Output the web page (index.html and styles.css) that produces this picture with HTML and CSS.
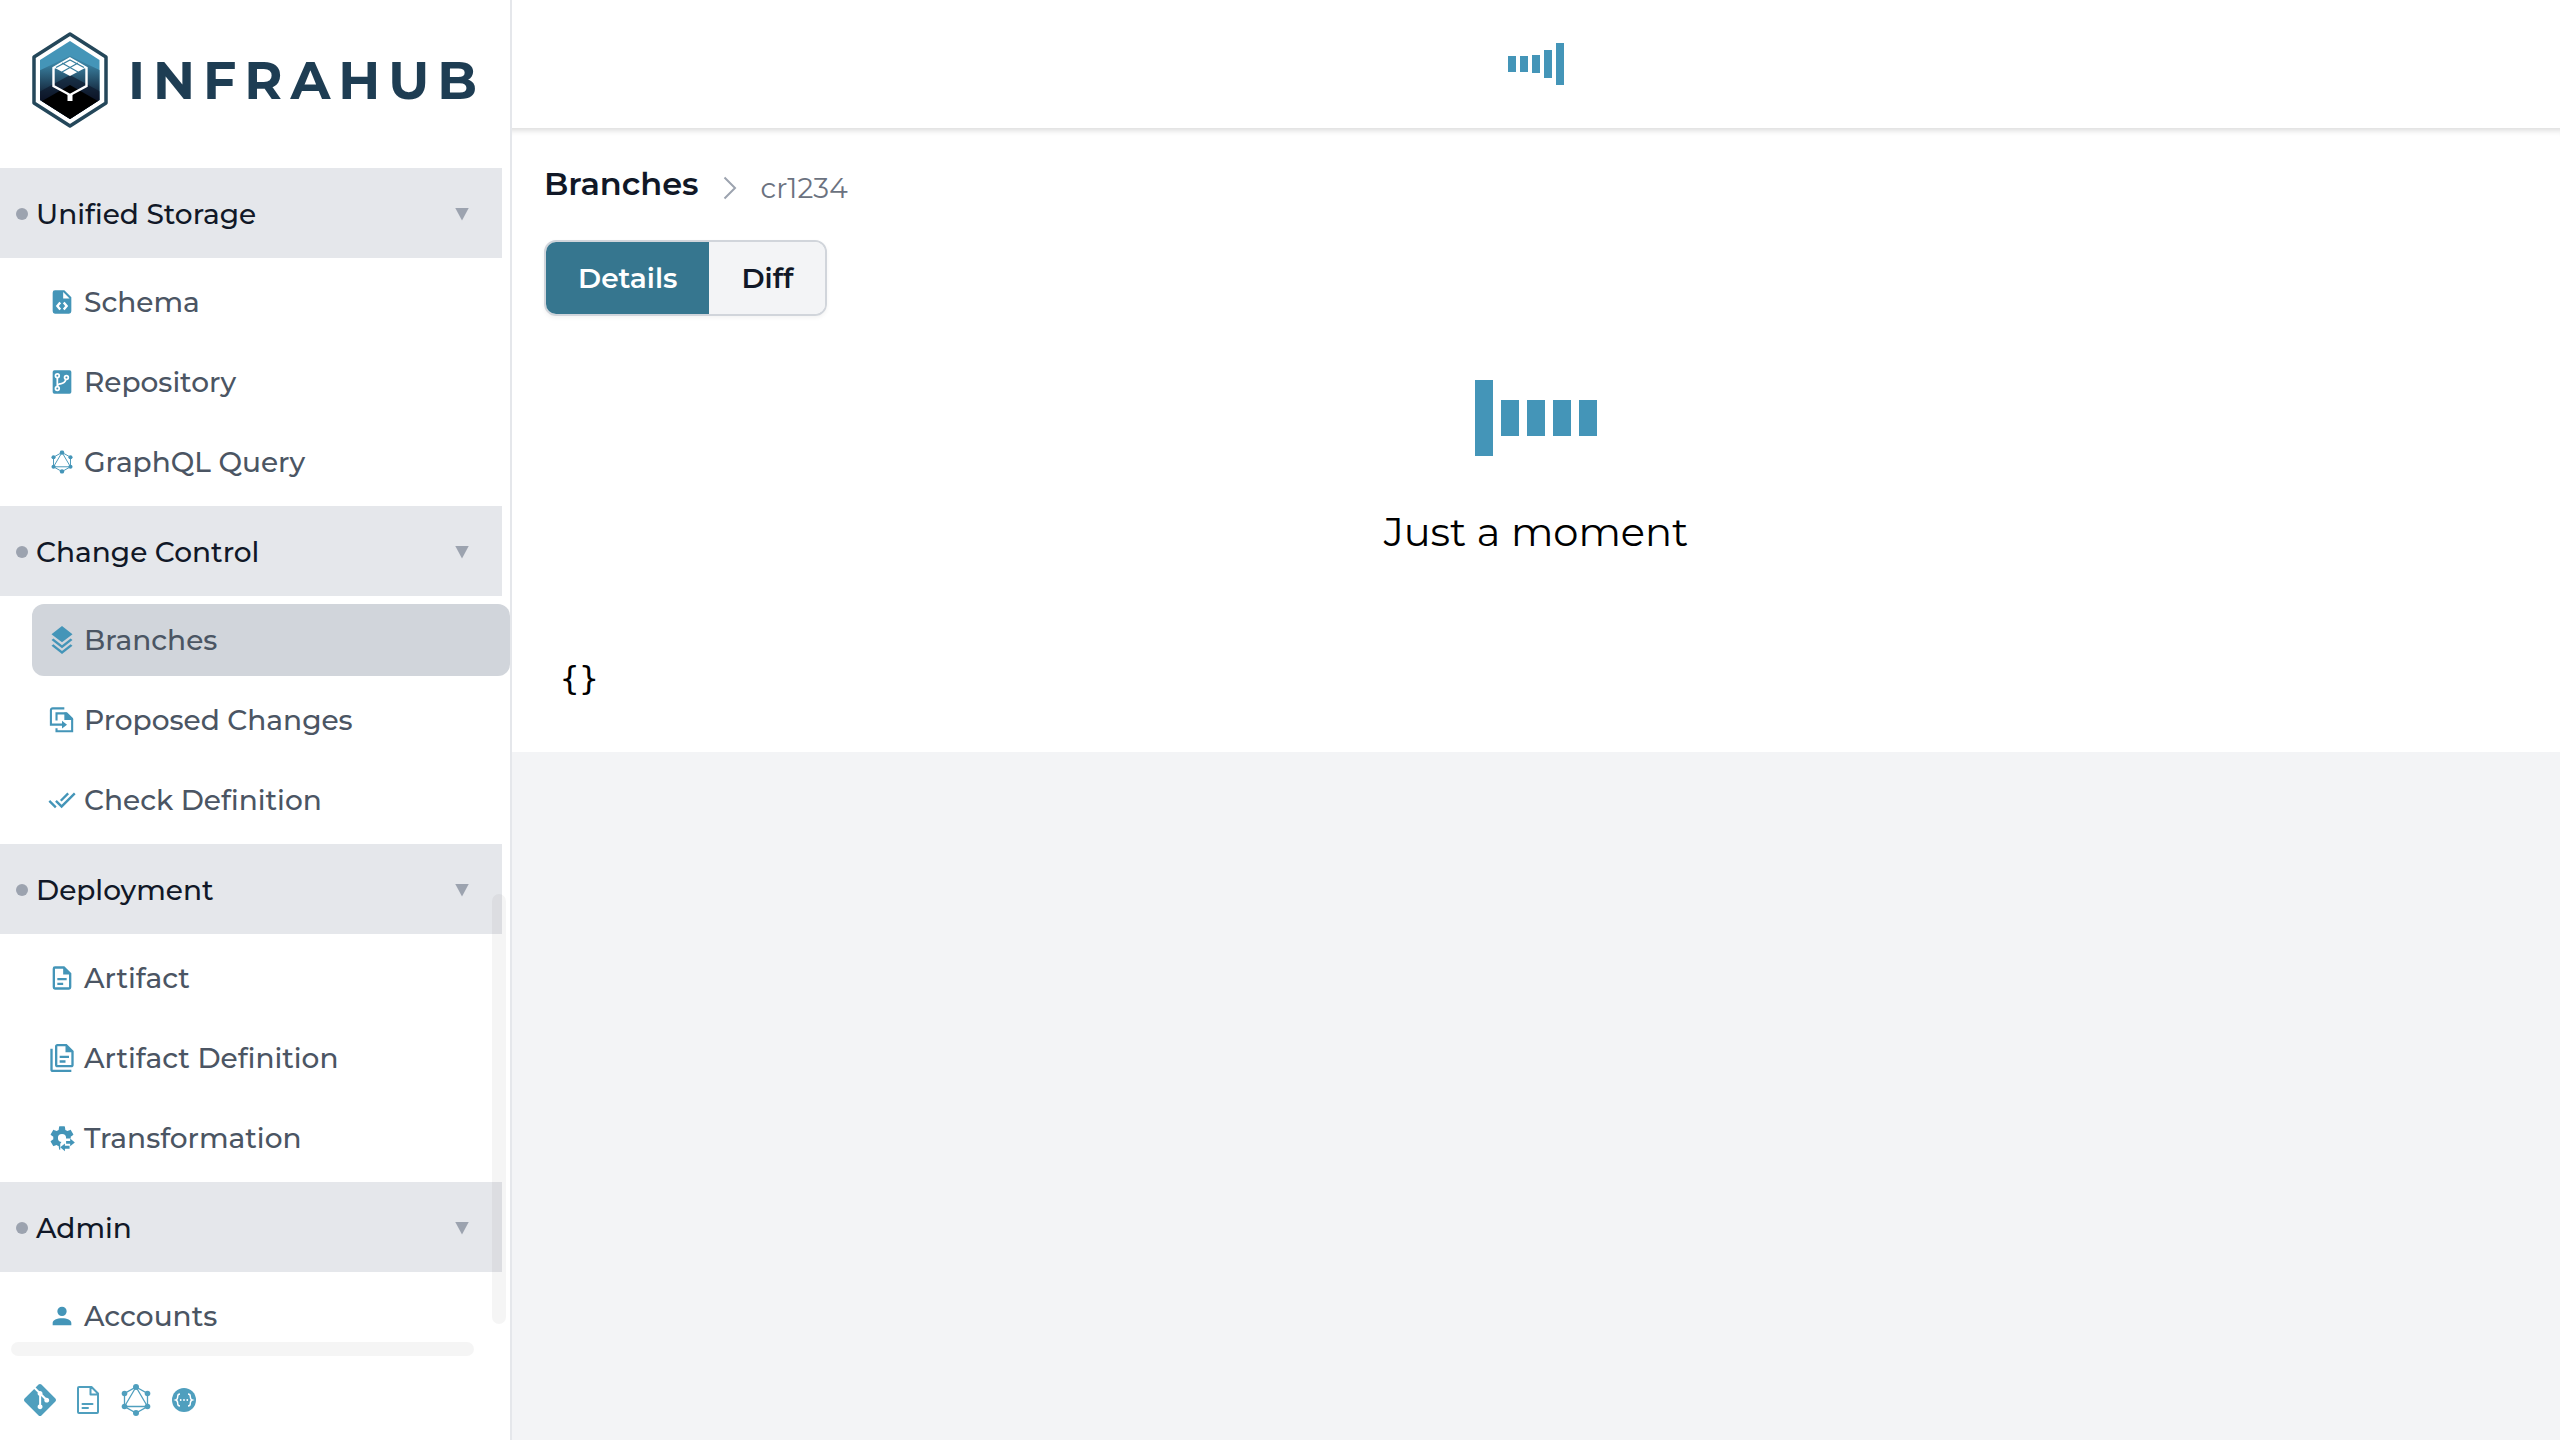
FILE: index.html
```html
<!DOCTYPE html>
<html lang="en">
<head>
<meta charset="utf-8">
<meta name="viewport" content="width=device-width, initial-scale=1">
<title>Infrahub</title>
<link rel="stylesheet" href="styles.css">
</head>
<body>
<svg class="defs" aria-hidden="true">
  <symbol id="graphql" viewBox="0 0 32 32">
    <path d="M16 3 27.5 9.5v13L16 29 4.500 22.500v-13zM16 3 4.500 22.500h23z" fill="none" stroke="currentColor" stroke-width="1.300"/>
    <g fill="currentColor"><circle cx="16" cy="3" r="3"/><circle cx="27.500" cy="9.500" r="2.800"/><circle cx="27.500" cy="22.500" r="2.800"/><circle cx="16" cy="29" r="3"/><circle cx="4.500" cy="22.500" r="2.800"/><circle cx="4.500" cy="9.500" r="2.800"/></g>
  </symbol>
</svg>
<div class="app">
  <aside class="sidebar">
    <a class="brand" href="#">
      <svg class="brand-mark" viewBox="0 0 76 96" aria-hidden="true">
        <defs>
          <linearGradient id="shade" x1="0" y1="0" x2="0" y2="1"><stop offset="0.1" stop-color="#3b83a3"/><stop offset="0.600" stop-color="#0d1528"/></linearGradient>
          <clipPath id="hex"><path d="M38 9 67.500 28v40L38 87 8 68V28z"/></clipPath>
        </defs>
        <path d="M38 2 74 25v46L38 94 2 71V25z" fill="#fff" stroke="#24475a" stroke-width="3.500" stroke-linejoin="round"/>
        <g clip-path="url(#hex)">
          <path d="M0 0h76v96H0z" fill="#4495b8"/>
          <path d="M38 24 76 42v54H0V42z" fill="url(#shade)"/>
          <path d="M38 43 76 64v32H0V64z" fill="#0d1528" opacity=".6"/>
          <path d="M38 53 76 75v21H0V75z" fill="#000"/>
        </g>
        <path d="M38 26.500 54.500 36v18L38 63 21.500 54V36z" fill="none" stroke="#fff" stroke-width="2.400"/>
        <path d="M35.500 62h5v7h-5z" fill="#fff"/>
        <path d="M38 26 54 35.500 38 44 22 35.500z" fill="#fff"/>
        <path d="M30 31 46 40M46 31 30 40M24 35.500 38 28 52 35.500" fill="none" stroke="#397f9e" stroke-width="1.200"/>
      </svg>
      <span class="brand-name">INFRAHUB</span>
    </a>

    <div class="nav-wrap">
      <nav class="nav" aria-label="Main">
        <section>
          <button class="group" type="button"><i class="dot"></i><span>Unified Storage</span><i class="caret"></i></button>
          <ul>
            <li><a href="#"><svg viewBox="0 0 24 24"><path fill-rule="evenodd" d="M6 2h8l6 6v12a2 2 0 0 1-2 2H6a2 2 0 0 1-2-2V4a2 2 0 0 1 2-2zM13 3.500V9h5.500z"/><path d="M10.500 12.500 8 15.500l2.500 3m3-6 2.500 3-2.500 3" fill="none" stroke="#fff" stroke-width="2"/></svg>Schema</a></li>
            <li><a href="#"><svg viewBox="0 0 24 24"><rect x="4" y="2" width="16" height="20" rx="1.500"/><g fill="none" stroke="#fff" stroke-width="1.500"><circle cx="8" cy="6.700" r="1.600"/><circle cx="8" cy="17.500" r="1.600"/><circle cx="15.800" cy="8.200" r="1.600"/><path d="M8 8.300v7.600M15.300 9.800c-.8 3.600-3.300 3.500-5.300 3.800-1.200.2-1.800.9-2 2"/></g></svg>Repository</a></li>
            <li><a href="#"><svg viewBox="-3 -3 38 38"><use href="#graphql" width="32" height="32"/></svg>GraphQL Query</a></li>
          </ul>
        </section>
        <section>
          <button class="group" type="button"><i class="dot"></i><span>Change Control</span><i class="caret"></i></button>
          <ul>
            <li><a class="active" href="#" aria-current="page"><svg viewBox="0 0 24 24"><path d="M12 0 3 7l1.630 1.260L12 14l7.360-5.730L21 7l-9-7m7.370 10.730L12 16.470l-7.380-5.730L3 12l9 7 9-7-1.630-1.270m0 4.990L12 21.470l-7.380-5.750L3 17l9 7 9-7-1.630-1.270Z"/></svg>Branches</a></li>
            <li><a href="#"><svg viewBox="0 0 24 24"><path d="M14 2H4a1.500 1.500 0 0 0-1.500 1.500V16H13M7.300 12.500V6.300h8.200l5.200 5.200v10.200H7.300V19" fill="none" stroke="currentColor" stroke-width="1.800"/><path d="M12 12.700 16.300 16 12 19.300zM14 5.500h2.500l5 5V12H14z"/></svg>Proposed Changes</a></li>
            <li><a href="#"><svg viewBox="0 0 24 24"><path d="M.41 13.410 6 19l1.410-1.420L1.830 12m20.410-6.420L11.660 16.170 7.500 12l-1.430 1.410L11.660 19l12-12M18 7l-1.410-1.420-6.350 6.350 1.420 1.410z"/></svg>Check Definition</a></li>
          </ul>
        </section>
        <section>
          <button class="group" type="button"><i class="dot"></i><span>Deployment</span><i class="caret"></i></button>
          <ul>
            <li><a href="#"><svg viewBox="0 0 24 24"><path d="M6 2a2 2 0 0 0-2 2v16a2 2 0 0 0 2 2h12a2 2 0 0 0 2-2V8l-6-6H6m0 2h7v5h5v11H6V4m2 8v2h8v-2H8m0 4v2h5v-2H8z"/></svg>Artifact</a></li>
            <li><a href="#"><svg viewBox="0 0 24 24"><path d="M16 0H8C6.900 0 6 .9 6 2v16c0 1.100.9 2 2 2h12c1.100 0 2-.9 2-2V6l-6-6m4 18H8V2h7v5h5v11M4 4v18h16v2H4c-1.100 0-2-.9-2-2V4h2m6 6v2h8v-2h-8m0 4v2h5v-2h-5z"/></svg>Artifact Definition</a></li>
            <li><a href="#"><svg viewBox="0 0 24 24"><defs><clipPath id="cog"><path d="M0 0h24v12.500h-8.500L12.500 14l-2 3v7H0z"/></clipPath></defs><path clip-path="url(#cog)" d="M12 15.500A3.500 3.500 0 0 1 8.500 12 3.500 3.500 0 0 1 12 8.500a3.500 3.500 0 0 1 3.500 3.500 3.500 3.500 0 0 1-3.500 3.500m7.430-2.530c.04-.32.07-.64.07-.97s-.03-.66-.07-1l2.110-1.630c.19-.15.24-.42.12-.64l-2-3.460c-.12-.22-.39-.31-.61-.22l-2.490 1c-.52-.39-1.060-.73-1.690-.98l-.37-2.650A.506.506 0 0 0 14 2h-4c-.25 0-.46.18-.5.42l-.37 2.650c-.63.25-1.170.59-1.690.98l-2.490-1c-.22-.09-.49 0-.61.22l-2 3.460c-.13.22-.07.49.12.64L4.570 11c-.04.34-.07.67-.07 1s.03.65.07.97l-2.110 1.660c-.19.15-.25.42-.12.64l2 3.460c.12.22.39.3.61.22l2.490-1.010c.52.4 1.060.74 1.690.99l.37 2.650c.04.24.25.42.5.42h4z"/><path d="M15.500 14.500H19V12.500l4 3.300-4 3.200v-2h-3.500zM18.500 18.700h-4v-2l-4 3.300 4 3.300v-2h4z"/></svg>Transformation</a></li>
          </ul>
        </section>
        <section>
          <button class="group" type="button"><i class="dot"></i><span>Admin</span><i class="caret"></i></button>
          <ul>
            <li><a href="#"><svg viewBox="0 0 24 24"><path d="M12 4a4 4 0 0 1 4 4 4 4 0 0 1-4 4 4 4 0 0 1-4-4 4 4 0 0 1 4-4m0 10c4.420 0 8 1.790 8 4v2H4v-2c0-2.210 3.580-4 8-4z"/></svg>Accounts</a></li>
          </ul>
        </section>
      </nav>
      <div class="thumb thumb-y"></div>
      <div class="thumb thumb-x"></div>
    </div>

    <div class="links">
      <a href="#" aria-label="Git"><svg viewBox="0 0 24 24"><path d="M23.546 10.930 13.067.452c-.604-.603-1.582-.603-2.188 0L8.708 2.627l2.760 2.760c.645-.215 1.379-.07 1.889.441.516.515.658 1.258.438 1.900l2.658 2.660c.645-.223 1.387-.078 1.900.435.721.72.721 1.884 0 2.604-.719.719-1.881.719-2.600 0-.539-.541-.674-1.337-.404-1.996L12.860 8.955v6.525c.176.086.342.203.488.348.713.721.713 1.883 0 2.600-.719.721-1.889.721-2.609 0-.719-.719-.719-1.879 0-2.598.182-.18.387-.316.605-.406V8.835c-.217-.091-.424-.222-.6-.401-.545-.545-.676-1.342-.396-2.009L7.636 3.700.45 10.881c-.6.605-.6 1.584 0 2.189l10.480 10.477c.604.604 1.582.604 2.186 0l10.430-10.430c.605-.603.605-1.582 0-2.187"/></svg></a>
      <a href="#" aria-label="Documentation"><svg viewBox="0 0 32 32"><path d="M7 3h12.500L26 9.500V28a1 1 0 0 1-1 1H7a1 1 0 0 1-1-1V4a1 1 0 0 1 1-1zM18.500 3v7.500H26M10.500 20h10M10.500 24h5.500" fill="none" stroke="currentColor" stroke-width="2" stroke-linecap="round" stroke-linejoin="round"/></svg></a>
      <a href="#" aria-label="GraphQL"><svg viewBox="0 0 32 32"><use href="#graphql" width="32" height="32"/></svg></a>
      <a href="#" aria-label="API"><svg viewBox="0 0 32 32"><circle cx="16" cy="16" r="12"/><path d="M12 10c-2 0-2.300.8-2.300 2.500S9.500 15.500 7.800 16c1.700.5 1.900 1.800 1.900 3.500s.3 2.500 2.300 2.500M20 10c2 0 2.300.8 2.300 2.500s.2 3 1.900 3.500c-1.700.5-1.900 1.800-1.900 3.500S22 22 20 22" fill="none" stroke="#fff" stroke-width="1.400"/><g fill="#fff"><circle cx="12.700" cy="16" r=".9"/><circle cx="16" cy="16" r=".9"/><circle cx="19.300" cy="16" r=".9"/></g></svg></a>
    </div>
  </aside>

  <div class="page">
    <header class="topbar">
      <div class="bars bars-small" role="status" aria-label="Loading"><i></i><i></i><i class="low"></i><i class="mid"></i><i class="tall"></i></div>
    </header>
    <main class="content">
      <div class="crumbs">
        <h1>Branches</h1>
        <svg viewBox="0 0 14 24" aria-hidden="true"><path d="M1.500 1.500 12 12 1.500 22.500" fill="none" stroke="#9ca3af" stroke-width="2"/></svg>
        <span>cr1234</span>
      </div>
      <div class="tabs">
        <button class="selected" type="button">Details</button>
        <button type="button">Diff</button>
      </div>
      <div class="loading" role="status">
        <div class="bars bars-large"><i class="tall"></i><i></i><i></i><i></i><i></i></div>
        <p>Just a moment</p>
      </div>
      <pre class="data">{}</pre>
    </main>
  </div>
</div>
</body>
</html>
```
FILE: styles.css
```css
* { box-sizing: border-box; }

body {
  margin: 0;
  font-family: "Montserrat", "Inter", sans-serif;
  font-size: 28px;
  line-height: 40px;
  color: #111827;
  background: #f3f4f6;
}

h1, p, pre, ul { margin: 0; padding: 0; }
ul { list-style: none; }
a { color: inherit; text-decoration: none; }
button { font: inherit; color: inherit; border: 0; cursor: pointer; }
svg { display: block; flex: none; fill: currentColor; }
.defs { position: absolute; width: 0; height: 0; }

.app { display: flex; height: 100vh; }

.sidebar {
  display: flex;
  flex-direction: column;
  flex: none;
  width: 512px;
  background: #fff;
  border-right: 2px solid #e5e7eb;
}

.brand {
  display: flex;
  align-items: center;
  gap: 20px;
  padding: 32px 24px 40px 32px;
}
.brand-mark { width: 76px; height: 96px; }
.brand-name {
  padding-top: 2px;
  color: #1e3d53;
  font-size: 52px;
  font-weight: 700;
  line-height: 64px;
  letter-spacing: 8px;
}

.nav-wrap { position: relative; flex: 1; min-height: 0; }
.nav { height: 100%; overflow: hidden; }
.nav ul { display: flex; flex-direction: column; gap: 8px; padding: 8px 0 8px 32px; }
.nav li a {
  display: flex;
  align-items: center;
  gap: 8px;
  height: 72px;
  padding: 0 16px;
  border-radius: 12px;
  color: #4b5563;
  font-weight: 500;
}
.nav li a.active { background: #d1d5db; }
.nav li svg { width: 28px; height: 28px; color: #4495b8; }

.group {
  display: flex;
  align-items: center;
  gap: 8px;
  width: 502px;
  height: 90px;
  padding: 2px 33px 0 16px;
  background: #e5e7eb;
  font-weight: 500;
  text-align: left;
}
.group span { flex: 1; }
.dot { width: 12px; height: 12px; border-radius: 50%; background: #9ca3af; }
.caret {
  width: 14px;
  height: 13px;
  background: #9ca3af;
  clip-path: polygon(0 0, 100% 0, 50% 100%);
}

.thumb { position: absolute; border-radius: 7px; background: rgba(0, 0, 0, .04); }
.thumb-y { right: 4px; bottom: 36px; width: 14px; height: 430px; }
.thumb-x { left: 11px; right: 36px; bottom: 4px; height: 14px; }

.links { display: flex; gap: 16px; padding: 24px; color: #4f9fbe; }
.links svg { width: 32px; height: 32px; }

.page { flex: 1; min-width: 0; }
.topbar {
  display: flex;
  align-items: center;
  justify-content: center;
  height: 128px;
  background: #fff;
}

.bars { display: flex; align-items: center; justify-content: center; }
.bars i { background: #4495b8; }
.bars-small { gap: 4px; height: 42px; }
.bars-small i { width: 8px; height: 16px; }
.bars-small .low { height: 18px; }
.bars-small .mid { height: 28px; }
.bars-small .tall { height: 42px; }
.bars-large { gap: 8px; height: 76px; }
.bars-large i { width: 18px; height: 36px; }
.bars-large .tall { height: 76px; }

.content {
  padding: 32px 32px 54px;
  background: #fff;
  box-shadow: inset 0 8px 6px -6px rgba(0, 0, 0, .16);
}

.crumbs { display: flex; align-items: center; height: 56px; color: #6b7280; }
.crumbs h1 {
  padding-bottom: 8px;
  color: #111827;
  font-size: 32px;
  font-weight: 600;
  line-height: 40px;
}
.crumbs svg { width: 14px; height: 24px; margin: 0 24px; }

.tabs {
  display: inline-flex;
  margin-top: 24px;
  border: 2px solid #d1d5db;
  border-radius: 12px;
  overflow: hidden;
  box-shadow: 0 2px 4px rgba(0, 0, 0, .05);
}
.tabs button { padding: 16px 32px; background: #f3f4f6; font-weight: 600; }
.tabs .selected { background: #36768f; color: #fff; }

.loading { display: flex; flex-direction: column; align-items: center; gap: 52px; padding-top: 64px; }
.loading p { color: #000; font-size: 40px; line-height: 48px; }

.data {
  margin-top: 102px;
  padding-left: 16px;
  color: #000;
  font-family: "DejaVu Sans Mono", monospace;
  font-size: 32px;
  line-height: 40px;
}
```
